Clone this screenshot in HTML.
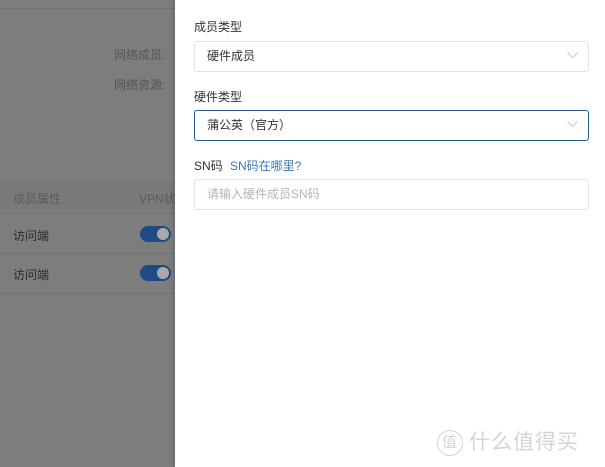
<!DOCTYPE html>
<html><head><meta charset="utf-8"><style>
*{margin:0;padding:0;box-sizing:border-box}
body{width:605px;height:467px;overflow:hidden;position:relative;font-family:"Liberation Sans","Noto Sans CJK SC",sans-serif;background:#fff}
.left{position:absolute;left:0;top:0;width:175px;height:467px;background:#7d7d7d;color:#555;font-size:12px}
.line{position:absolute;left:0;width:175px;height:1px;background:#717171}
.t{position:absolute;white-space:nowrap}
.sw{position:absolute;left:140px;width:31px;height:16px;border-radius:8px;background:#1e4a86}
.sw::after{content:"";position:absolute;right:2px;top:2px;width:12px;height:12px;border-radius:50%;background:#a9a9a9}
.drawer{position:absolute;left:175px;top:0;width:430px;height:467px;background:#fff;box-shadow:-2px 0 4px rgba(0,0,0,.15)}
.lbl{position:absolute;left:19px;font-size:12px;color:#333}
.box{position:absolute;left:19px;width:395px;height:31px;border:1px solid #e3e3e3;border-radius:3px;font-size:12px;color:#333;padding-left:12px;line-height:29px}
.box.sel{border-color:#2c5b8f}
.chev{position:absolute;right:10px;top:10px}
</style></head><body>
<div class="left">
<div class="line" style="top:8px"></div>
<div class="t" style="left:114px;top:46px">网络成员:</div>
<div class="t" style="left:114px;top:76px">网络资源:</div>
<div class="line" style="top:182px;background:#747474"></div>
<div style="position:absolute;left:0;top:183px;width:175px;height:30px;background:#7a7a7a"></div>
<div class="t" style="left:13px;top:190px;color:#5a5a5a">成员属性</div>
<div class="t" style="left:139px;top:190px;color:#5a5a5a">VPN状</div>
<div class="line" style="top:213px"></div>
<div class="t" style="left:13px;top:227px;color:#2a2a2a">访问端</div>
<div class="sw" style="top:226px"></div>
<div class="line" style="top:253px"></div>
<div class="t" style="left:13px;top:266px;color:#2a2a2a">访问端</div>
<div class="sw" style="top:265px"></div>
<div class="line" style="top:293px"></div>
</div>
<div class="drawer">
<div class="lbl" style="top:18px">成员类型</div>
<div class="box" style="top:41px">硬件成员<svg class="chev" width="11" height="7"><path d="M0.5 0.5L5.5 5.5L10.5 0.5" fill="none" stroke="#c8c8c8"/></svg></div>
<div class="lbl" style="top:88px">硬件类型</div>
<div class="box sel" style="top:110px">蒲公英（官方）<svg class="chev" width="11" height="7"><path d="M0.5 0.5L5.5 5.5L10.5 0.5" fill="none" stroke="#c8c8c8"/></svg></div>
<div class="lbl" style="top:157px">SN码 <span style="color:#3a78b5;margin-left:4px">SN码在哪里?</span></div>
<div class="box" style="top:179px;color:#b5b5b5">请输入硬件成员SN码</div>
<div style="position:absolute;left:262px;top:426px;font-size:21px;color:#d4d4d4;white-space:nowrap;letter-spacing:1px"><span style="display:inline-block;width:26px;height:26px;border:1.5px solid #d4d4d4;border-radius:50%;font-size:15px;text-align:center;line-height:23px;vertical-align:middle;margin-right:6px">值</span>什么值得买</div>
</div>
</body></html>
